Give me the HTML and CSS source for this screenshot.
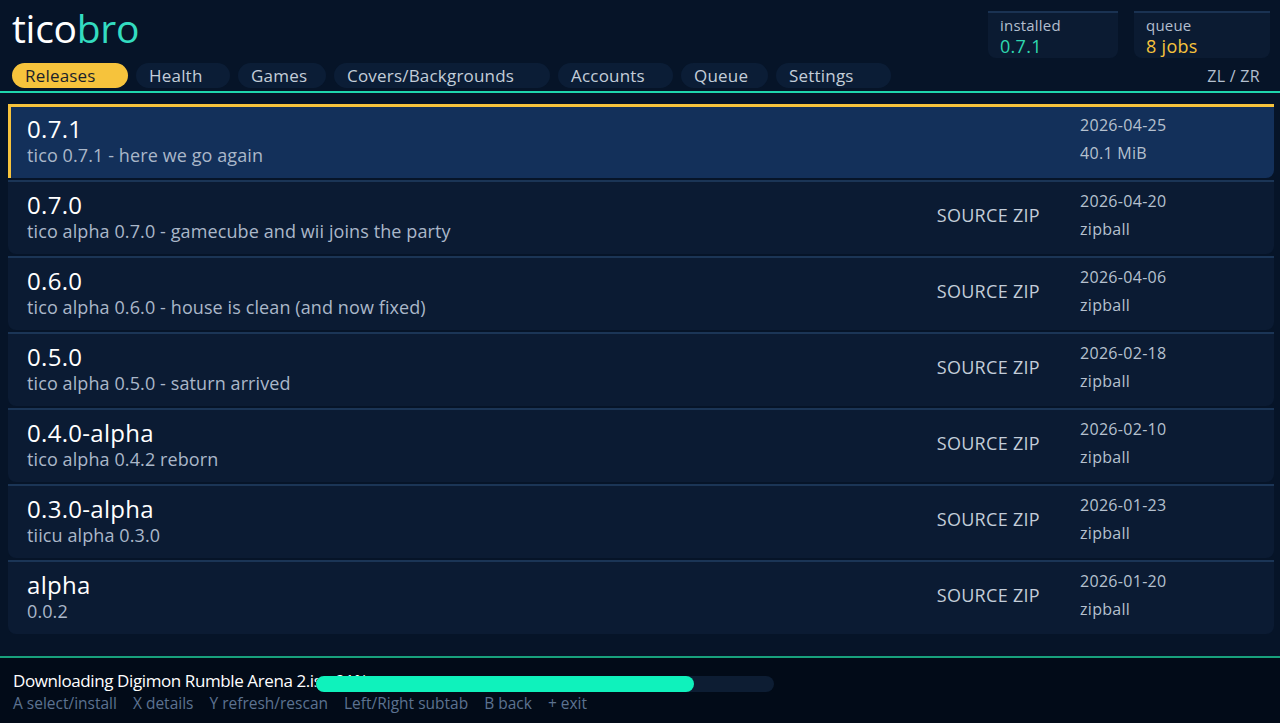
FILE: index.html
```html
<!DOCTYPE html>
<html>

<head>
    <title>ticobro</title>
    <link rel="stylesheet" href="styles.css">
</head>

<body>
    <div class="app">
        <header class="top">
            <div class="top-row">
                <div class="brand">tico<span class="brand-accent">bro</span></div>
                <div class="stats">
                    <div class="stat">
                        <div class="stat-label">installed</div>
                        <div class="stat-value teal">0.7.1</div>
                    </div>
                    <div class="stat stat-wide">
                        <div class="stat-label">queue</div>
                        <div class="stat-value yellow">8 jobs</div>
                    </div>
                </div>
            </div>
            <nav class="tabs">
                <span class="tab tab-releases active">Releases</span>
                <span class="tab tab-health">Health</span>
                <span class="tab tab-games">Games</span>
                <span class="tab tab-covers">Covers/Backgrounds</span>
                <span class="tab tab-accounts">Accounts</span>
                <span class="tab tab-queue">Queue</span>
                <span class="tab tab-settings">Settings</span>
                <span class="shoulder">ZL / ZR</span>
            </nav>
        </header>

        <main class="list">
            <div class="row selected">
                <div class="row-main">
                    <div class="row-title">0.7.1</div>
                    <div class="row-sub">tico 0.7.1 - here we go again</div>
                </div>
                <div class="row-meta">
                    <div>2026-04-25</div>
                    <div>40.1 MiB</div>
                </div>
            </div>
            <div class="row">
                <div class="row-main">
                    <div class="row-title">0.7.0</div>
                    <div class="row-sub">tico alpha 0.7.0 - gamecube and wii joins the party</div>
                </div>
                <div class="row-asset">SOURCE ZIP</div>
                <div class="row-meta">
                    <div>2026-04-20</div>
                    <div>zipball</div>
                </div>
            </div>
            <div class="row">
                <div class="row-main">
                    <div class="row-title">0.6.0</div>
                    <div class="row-sub">tico alpha 0.6.0 - house is clean (and now fixed)</div>
                </div>
                <div class="row-asset">SOURCE ZIP</div>
                <div class="row-meta">
                    <div>2026-04-06</div>
                    <div>zipball</div>
                </div>
            </div>
            <div class="row">
                <div class="row-main">
                    <div class="row-title">0.5.0</div>
                    <div class="row-sub">tico alpha 0.5.0 - saturn arrived</div>
                </div>
                <div class="row-asset">SOURCE ZIP</div>
                <div class="row-meta">
                    <div>2026-02-18</div>
                    <div>zipball</div>
                </div>
            </div>
            <div class="row">
                <div class="row-main">
                    <div class="row-title">0.4.0-alpha</div>
                    <div class="row-sub">tico alpha 0.4.2 reborn</div>
                </div>
                <div class="row-asset">SOURCE ZIP</div>
                <div class="row-meta">
                    <div>2026-02-10</div>
                    <div>zipball</div>
                </div>
            </div>
            <div class="row">
                <div class="row-main">
                    <div class="row-title">0.3.0-alpha</div>
                    <div class="row-sub">tiicu alpha 0.3.0</div>
                </div>
                <div class="row-asset">SOURCE ZIP</div>
                <div class="row-meta">
                    <div>2026-01-23</div>
                    <div>zipball</div>
                </div>
            </div>
            <div class="row">
                <div class="row-main">
                    <div class="row-title">alpha</div>
                    <div class="row-sub">0.0.2</div>
                </div>
                <div class="row-asset">SOURCE ZIP</div>
                <div class="row-meta">
                    <div>2026-01-20</div>
                    <div>zipball</div>
                </div>
            </div>
        </main>

        <footer class="footer">
            <div class="status">Downloading Digimon Rumble Arena 2.iso 91%</div>
            <div class="progress">
                <div class="progress-fill" style="width: 82.5%"></div>
            </div>
            <div class="hints">
                <span>A select/install</span>
                <span>X details</span>
                <span>Y refresh/rescan</span>
                <span>Left/Right subtab</span>
                <span>B back</span>
                <span>+ exit</span>
            </div>
        </footer>
    </div>
</body>

</html>
```

FILE: styles.css
```css
body {
    margin: 0;
    padding: 0;
    background-color: #061428;
    font-family: "Open Sans", "Noto Sans", sans-serif;
    color: #fff;
}

.app {
    width: 1280px;
    height: 723px;
    display: flex;
    flex-direction: column;
    overflow: hidden;
}

/* header */

.top {
    border-bottom: 2px solid #1fd6ad;
    padding: 0 10px 0 12px;
}

.top-row {
    display: flex;
    justify-content: space-between;
    align-items: flex-start;
    height: 63px;
}

.brand {
    font-size: 39px;
    line-height: 39px;
    margin-top: 8px;
    letter-spacing: -0.3px;
    color: #fff;
}

.brand-accent {
    color: #33dcc0;
}

.stats {
    display: flex;
    gap: 16px;
    margin-top: 11px;
}

.stat {
    width: 106px;
    height: 45px;
    padding: 0 12px;
    background-color: #0b1b32;
    border-top: 2px solid #1a3252;
    border-radius: 0 0 8px 8px;
}

.stat-wide {
    width: 112px;
}

.stat-label {
    font-size: 15px;
    line-height: 20px;
    margin-top: 2px;
    color: #b3bfcf;
    letter-spacing: 0.2px;
}

.stat-value {
    font-size: 18px;
    line-height: 22px;
    letter-spacing: 0.3px;
}

.teal {
    color: #2fd8b0;
}

.yellow {
    color: #f6c33c;
}

.tabs {
    display: flex;
    align-items: center;
    gap: 8px;
    height: 25px;
    padding-bottom: 3px;
}

.tab {
    box-sizing: border-box;
    height: 25px;
    line-height: 25px;
    padding-left: 13px;
    font-size: 17px;
    letter-spacing: 0.2px;
    white-space: nowrap;
    color: #c3cdd9;
    background-color: #0b1d36;
    border-radius: 13px;
}

.tab-releases { width: 116px; }
.tab-health { width: 94px; }
.tab-games { width: 88px; }
.tab-covers { width: 216px; }
.tab-accounts { width: 115px; }
.tab-queue { width: 87px; }
.tab-settings { width: 115px; }

.tab.active {
    background-color: #f6c33c;
    color: #1b1f2a;
}

.shoulder {
    margin-left: auto;
    font-size: 16px;
    letter-spacing: 0.3px;
    color: #b3bfcf;
    padding-right: 10px;
}

/* release list */

.list {
    flex: 1;
    padding: 11px 6px 0 8px;
    display: flex;
    flex-direction: column;
    gap: 2px;
}

.row {
    display: flex;
    align-items: flex-start;
    height: 72px;
    background-color: #0b1b33;
    border-top: 2px solid #1b3556;
    border-radius: 0 0 8px 8px;
}

.row.selected {
    background-color: #13305a;
    border-top: 3px solid #f6c33c;
    border-left: 3px solid #f6c33c;
    height: 71px;
    border-radius: 0 0 8px 0;
}

.row-main {
    flex: 1;
    padding: 8px 0 0 19px;
}

.row.selected .row-main {
    padding-top: 7px;
    padding-left: 16px;
}

.row-title {
    font-size: 24px;
    line-height: 30px;
    letter-spacing: 0.3px;
    color: #fff;
}

.row-sub {
    font-size: 18px;
    line-height: 22px;
    letter-spacing: 0.1px;
    color: #aab7c9;
}

.row-asset {
    align-self: center;
    margin-bottom: 6px;
    font-size: 18px;
    letter-spacing: 0.3px;
    color: #c3cdd9;
    padding-right: 40px;
}

.row-meta {
    width: 194px;
    padding-top: 5px;
    font-size: 16px;
    line-height: 28px;
    letter-spacing: 0.3px;
    color: #b6c1cf;
}

.row.selected .row-meta {
    padding-top: 4px;
}

/* footer */

.footer {
    position: relative;
    height: 65px;
    background-color: #020b18;
    border-top: 2px solid #18a17c;
    padding: 0 13px;
}

.status {
    font-size: 17px;
    line-height: 22px;
    margin-top: 12px;
    color: #fff;
    letter-spacing: -0.4px;
}

.progress {
    position: absolute;
    left: 316px;
    top: 18px;
    width: 458px;
    height: 16px;
    background-color: #0d1d33;
    border-radius: 8px;
}

.progress-fill {
    height: 100%;
    background-color: #0ff2bc;
    border-radius: 8px;
}

.hints {
    display: flex;
    gap: 16px;
    font-size: 15.5px;
    line-height: 22px;
    color: #5c7290;
}
```
